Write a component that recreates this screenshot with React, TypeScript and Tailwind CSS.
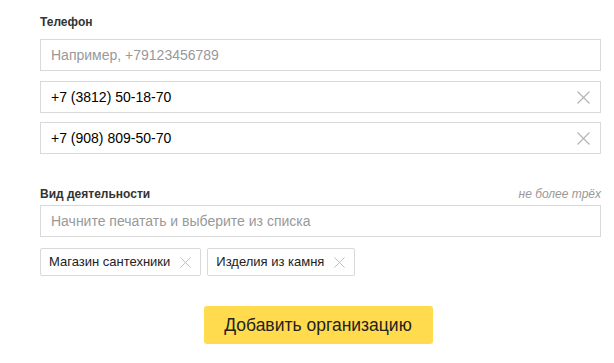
const font = { fontFamily: '"Liberation Sans", Arial, sans-serif' };

function Cross({ size = 13, color = "#b3b3b3" }: { size?: number; color?: string }) {
  return (
    <svg width={size} height={size} viewBox="0 0 13 13" fill="none">
      <path d="M0.5 0.5L12.5 12.5M12.5 0.5L0.5 12.5" stroke={color} strokeWidth="1.1" />
    </svg>
  );
}

function Field({ value, placeholder }: { value?: string; placeholder?: string }) {
  return (
    <div className="h-[32px] border border-[#d9d9d9] flex items-center px-[10px]">
      {value ? (
        <>
          <span className="flex-1 text-[14px] text-black">{value}</span>
          <Cross />
        </>
      ) : (
        <span className="text-[14px] text-[#999]">{placeholder}</span>
      )}
    </div>
  );
}

function Tag({ label }: { label: string }) {
  return (
    <div className="h-[28px] border border-[#d9d9d9] rounded-[2px] flex items-center pl-[8px] pr-[9px] gap-[10px]">
      <span className="text-[13px] text-[#222]">{label}</span>
      <Cross size={11} color="#bbb" />
    </div>
  );
}

export default function App() {
  return (
    <div className="w-[614px] h-[363px] bg-white" style={font}>
      <div className="ml-[40px] w-[561px] pt-[14px]">
        <div className="text-[12px] font-bold text-[#333] leading-[16px] h-[25px]">Телефон</div>
        <Field placeholder="Например, +79123456789" />
        <div className="mt-[10px]">
          <Field value="+7 (3812) 50-18-70" />
        </div>
        <div className="mt-[9px]">
          <Field value="+7 (908) 809-50-70" />
        </div>

        <div className="flex justify-between items-center mt-[30px] h-[20px]">
          <span className="text-[12px] font-bold text-[#333]">Вид деятельности</span>
          <span className="text-[12px] italic text-[#999]">не более трёх</span>
        </div>
        <div className="mt-[1px]">
          <Field placeholder="Начните печатать и выберите из списка" />
        </div>
        <div className="flex gap-[6px] mt-[11px]">
          <Tag label="Магазин сантехники" />
          <Tag label="Изделия из камня" />
        </div>
        <div className="flex justify-center mt-[30px]">
          <button className="h-[38px] w-[229px] bg-[#ffdb4d] rounded-[3px] text-[17.5px] text-[#222] ml-[-5px]">
            Добавить организацию
          </button>
        </div>
      </div>
    </div>
  );
}
